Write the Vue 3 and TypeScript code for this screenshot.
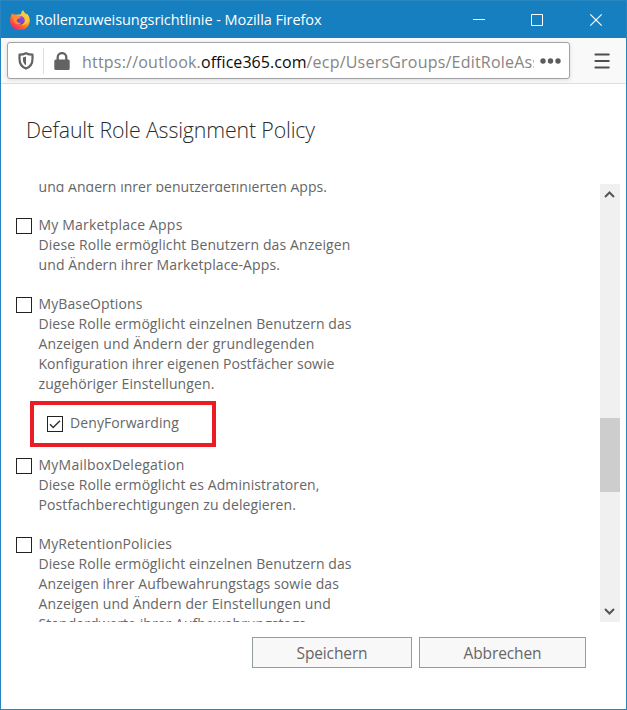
<script setup lang="ts">
interface Line { text: string; width: number }
interface Role { id: string; lines: Line[]; checked?: boolean; partial?: boolean; marked?: boolean }

const roles: Role[] = [
  { id: 'custom', partial: true, lines: [{ text: 'und Ändern ihrer benutzerdefinierten Apps.', width: 288.5 }] },
  { id: 'market', lines: [
    { text: 'My Marketplace Apps', width: 144 },
    { text: 'Diese Rolle ermöglicht Benutzern das Anzeigen', width: 312 },
    { text: 'und Ändern ihrer Marketplace-Apps.', width: 241.5 },
  ] },
  { id: 'base', lines: [
    { text: 'MyBaseOptions', width: 104 },
    { text: 'Diese Rolle ermöglicht einzelnen Benutzern das', width: 313 },
    { text: 'Anzeigen und Ändern der grundlegenden', width: 276 },
    { text: 'Konfiguration ihrer eigenen Postfächer sowie', width: 296 },
    { text: 'zugehöriger Einstellungen.', width: 176 },
  ] },
  { id: 'deny', checked: true, marked: true, lines: [{ text: 'DenyForwarding', width: 109 }] },
  { id: 'delegation', lines: [
    { text: 'MyMailboxDelegation', width: 146 },
    { text: 'Diese Rolle ermöglicht es Administratoren,', width: 281 },
    { text: 'Postfachberechtigungen zu delegieren.', width: 257.5 },
  ] },
  { id: 'retention', lines: [
    { text: 'MyRetentionPolicies', width: 133.5 },
    { text: 'Diese Rolle ermöglicht einzelnen Benutzern das', width: 313 },
    { text: 'Anzeigen ihrer Aufbewahrungstags sowie das', width: 300.5 },
    { text: 'Anzeigen und Ändern der Einstellungen und', width: 292.5 },
    { text: 'Standardwerte ihrer Aufbewahrungstags.', width: 271 },
  ] },
]

// Spreads the tracking of a text run so that it fills the given width.
const vFit = {
  mounted(el: HTMLElement, binding: { value: number }) {
    const count = (el.textContent ?? '').length
    const natural = el.getBoundingClientRect().width
    el.style.letterSpacing = `${(binding.value - natural) / count}px`
  },
}
</script>

<template>
  <div class="window">
    <header class="titlebar">
      <svg class="fox" width="20" height="20" viewBox="0 0 20 20">
        <defs>
          <linearGradient id="flame" x1="0.85" y1="0.05" x2="0.2" y2="0.95">
            <stop offset="0" stop-color="#fff14f" />
            <stop offset="0.35" stop-color="#ffb829" />
            <stop offset="0.65" stop-color="#ff6a2c" />
            <stop offset="1" stop-color="#f5216c" />
          </linearGradient>
          <linearGradient id="globe" x1="0.7" y1="0" x2="0.3" y2="1">
            <stop offset="0" stop-color="#a04be8" />
            <stop offset="1" stop-color="#5447c9" />
          </linearGradient>
        </defs>
        <path fill="url(#flame)" d="M2.3 3.3 3.5 5 6 4.8 8 4.4 11.2 4.2C11 2.4 12.1 1 13.2.3c.3 2 2 2.7 3.2 4.1l.5-.9c2.2 2.6 3.2 5.4 2.8 8.3C19 16.7 15 20 10 20 4.600 20 .5 16.300.1 11.400-.1 8.300.8 5.400 2.300 3.300Z" />
        <circle cx="10.400" cy="10.200" r="4.300" fill="url(#globe)" />
        <path fill="#ff8a30" d="M2.800 4.600C4.200 4.200 6.200 4.500 7.300 6c1.400-.4 2.800 0 3.700.9-.6 1.300-2.500 1.400-3.600 2.400-.8.8-.8 1.900 0 2.800 1 1 2.600.9 4 .4-1.300 2.200-4.500 2.400-6.300.6C3.100 11.200 2.200 7.800 2.800 4.600Z" />
        <path fill="#ffcb35" d="M11.500 4c3 1.300 4.600 4.400 3.700 7.500-.5 1.700-1.700 2.800-3.200 3.400 3.700.1 6-2.300 6.200-5.500.1-2.500-1.200-4-3-5.500-.8-.7-1.500-1.500-2-2.500-.9.700-1.500 1.500-1.700 2.600Z" />
      </svg>
      <span class="caption"><span v-fit="286.500">Rollenzuweisungsrichtlinie - Mozilla Firefox</span></span>
      <svg class="controls" width="140" height="20" viewBox="0 0 140 20" fill="none" stroke="#fff">
        <path d="M0 9.500H12M58.500 4.500h11v11h-11z" />
        <path d="M117.300 4.300l11.400 11.400M128.700 4.300 117.300 15.700" stroke-width="1.200" />
      </svg>
    </header>

    <div class="toolbar">
      <div class="urlbar">
        <svg class="shield" width="16" height="18" viewBox="0 0 16 18">
          <path d="M8 1.200C10.200 2.300 12.300 2.700 14.500 2.700V7c0 4.500-2.300 7.900-6.500 9.600C3.800 14.900 1.500 11.500 1.500 7V2.700C3.700 2.700 5.800 2.300 8 1.200Z" fill="none" stroke="#636363" stroke-width="2.200" stroke-linejoin="round" />
          <path d="M8 4.600V13.300C5.900 12 4.900 10 4.900 7.300V5.400C6 5.300 7 5.100 8 4.600Z" fill="#636363" />
        </svg>
        <i class="divider"></i>
        <svg class="lock" width="16" height="18" viewBox="0 0 16 18">
          <path d="M3.700 9V5.400a4.300 4.300 0 0 1 8.600 0V9" fill="none" stroke="#636363" stroke-width="2.300" />
          <rect x="0.300" y="7.600" width="15.400" height="10.400" rx="1.500" fill="#636363" />
        </svg>
        <div class="url"><span v-fit="119">https://outlook.</span><span v-fit="105.500" class="host">office365.com</span><span v-fit="238">/ecp/UsersGroups/EditRoleAssi</span></div>
        <svg class="dots" width="22" height="6" viewBox="0 0 22 6" fill="#5c5c5c">
          <circle cx="3" cy="3" r="2.700" /><circle cx="10.500" cy="3" r="2.700" /><circle cx="18" cy="3" r="2.700" />
        </svg>
      </div>
      <svg class="menu" width="16" height="16" viewBox="0 0 16 16" stroke="#4e4e4e" stroke-width="2.200" stroke-linecap="round">
        <path d="M1.500 1.500H14.700M1.500 8H14.700M1.500 14.500H14.700" />
      </svg>
    </div>

    <main class="page">
      <h1><span v-fit="289">Default Role Assignment Policy</span></h1>
      <div class="scroller">
        <div class="roles">
          <section v-for="role in roles" :key="role.id" class="role" :class="{ marked: role.marked, partial: role.partial }">
            <span v-if="!role.partial" class="box">
              <svg v-if="role.checked" width="14" height="14" viewBox="0 0 14 14"><path d="M2 7.300 5.200 10.500 12 3.700" fill="none" stroke="#333" stroke-width="1.500" /></svg>
            </span>
            <div class="text">
              <div v-for="line in role.lines" :key="line.text" class="line"><span v-fit="line.width">{{ line.text }}</span></div>
            </div>
          </section>
        </div>
        <div class="scrollbar">
          <svg width="20" height="20" viewBox="0 0 20 20"><path d="M5 13 9.500 8.500 14 13" fill="none" stroke="#555" stroke-width="2" /></svg>
          <i class="thumb"></i>
          <svg width="20" height="20" viewBox="0 0 20 20"><path d="M5 7 9.500 11.500 14 7" fill="none" stroke="#555" stroke-width="2" /></svg>
        </div>
      </div>
      <footer class="actions">
        <button class="save"><span v-fit="71">Speichern</span></button>
        <button class="cancel"><span v-fit="78">Abbrechen</span></button>
      </footer>
    </main>
  </div>
</template>

<style>
body { margin: 0; background: #fff; }
</style>

<style scoped>
* { box-sizing: border-box; }
.window { width: 627px; height: 710px; border: 1px solid #2785c0; background: #fff; font-family: "Open Sans", "Noto Sans", sans-serif; color: #666; display: flex; flex-direction: column; overflow: hidden; white-space: nowrap; }
svg { display: block; flex: none; }
.titlebar { height: 37px; flex: none; background: #157fbf; display: flex; align-items: center; padding-left: 9px; color: #fff; }
.caption { width: 290px; margin-left: 5px; font-size: 14.500px; line-height: 20px; }
.controls { margin-left: 148px; }
.toolbar { height: 46px; flex: none; background: #f9f9fa; border-bottom: 1px solid #dedede; display: flex; align-items: center; padding-left: 6px; }
.urlbar { width: 563px; height: 37px; border: 1px solid #a2a2a4; border-radius: 3px; background: #fff; box-shadow: 0 1px 4px rgba(0, 0, 0, 0.12); display: flex; align-items: center; padding-left: 10px; }
.divider { width: 1px; height: 26px; background: #dedede; margin: 0 10px 0 9px; }
.url { width: 452px; margin-left: 12px; padding-top: 2px; overflow: hidden; font-size: 16px; line-height: 26px; color: #858585; }
.host { color: #0c0c0d; }
.dots { margin-left: 6px; }
.menu { margin-left: 24px; }
.page { flex: 1; min-height: 0; display: flex; flex-direction: column; }
h1 { margin: 0; padding: 31px 0 0 25px; height: 100px; font-size: 21.300px; line-height: 30px; font-weight: 300; color: #2b2b2b; }
.scroller { height: 438px; display: flex; justify-content: space-between; overflow: hidden; padding-right: 6px; }
.roles { padding-left: 15px; margin-top: -7px; display: flex; flex-direction: column; gap: 19px; }
.role { display: flex; align-items: flex-start; flex: none; }
.partial { margin-bottom: -1px; }
.box { width: 16px; height: 16px; border: 1px solid #222; margin-top: 3px; flex: none; }
.box + .text { margin-left: 6.500px; }
.text { font-size: 14px; line-height: 20px; }
.text:first-child { margin-left: 22.500px; }
.line { height: 20px; }
.marked { width: 186px; height: 46px; margin: -12px 0 -11px 14px; border: 4px solid #ec1c24; padding: 8px 0 0 13px; }
.marked .box + .text { margin-left: 7px; }
.scrollbar { width: 20px; background: #f0f0f0; display: flex; flex-direction: column; }
.thumb { height: 74px; margin: 214px 0 110px; background: #cdcdcd; flex: none; }
.actions { display: flex; gap: 7px; padding: 15px 0 0 251px; }
button { height: 31px; padding: 0; border: 1px solid #929e9e; background: #f8f8f8; font: 15.500px/28px "Open Sans", "Noto Sans", sans-serif; color: #666; }
.save { width: 160px; }
.cancel { width: 167px; }
</style>
